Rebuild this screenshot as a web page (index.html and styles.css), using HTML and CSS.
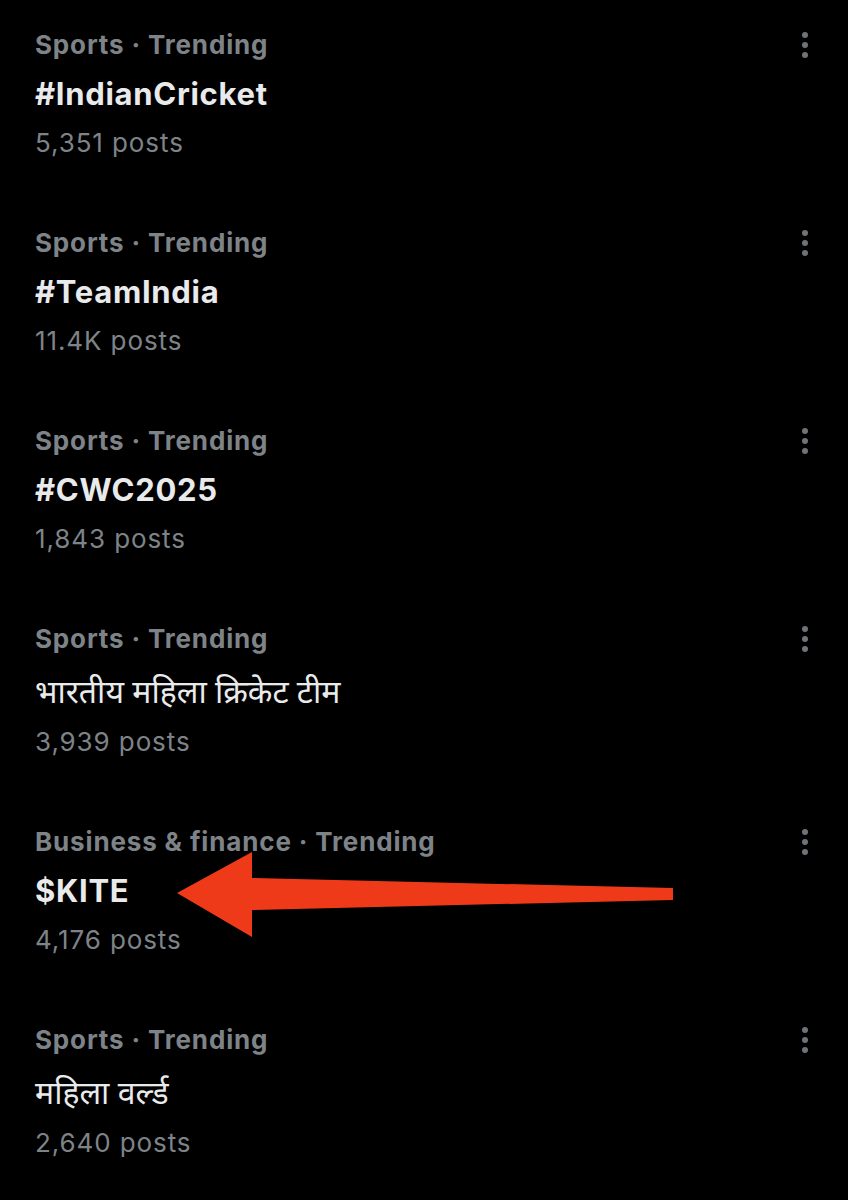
FILE: index.html
```html
<!DOCTYPE html>
<html lang="en">
<head>
<meta charset="utf-8">
<title>Trending</title>
<link rel="stylesheet" href="styles.css">
</head>
<body>

<section id="trends">

  <div class="trend">
    <div class="trend-text">
      <div class="trend-meta">Sports · Trending</div>
      <div class="trend-name">#IndianCricket</div>
      <div class="trend-count">5,351 posts</div>
    </div>
    <svg class="more" viewBox="0 0 24 24"><circle cx="12" cy="4" r="3"/><circle cx="12" cy="14" r="3"/><circle cx="12" cy="24" r="3"/></svg>
  </div>

  <div class="trend">
    <div class="trend-text">
      <div class="trend-meta">Sports · Trending</div>
      <div class="trend-name">#TeamIndia</div>
      <div class="trend-count">11.4K posts</div>
    </div>
    <svg class="more" viewBox="0 0 24 24"><circle cx="12" cy="4" r="3"/><circle cx="12" cy="14" r="3"/><circle cx="12" cy="24" r="3"/></svg>
  </div>

  <div class="trend">
    <div class="trend-text">
      <div class="trend-meta">Sports · Trending</div>
      <div class="trend-name">#CWC2025</div>
      <div class="trend-count">1,843 posts</div>
    </div>
    <svg class="more" viewBox="0 0 24 24"><circle cx="12" cy="4" r="3"/><circle cx="12" cy="14" r="3"/><circle cx="12" cy="24" r="3"/></svg>
  </div>

  <div class="trend">
    <div class="trend-text">
      <div class="trend-meta">Sports · Trending</div>
      <div class="trend-name hindi" lang="hi">भारतीय महिला क्रिकेट टीम</div>
      <div class="trend-count">3,939 posts</div>
    </div>
    <svg class="more" viewBox="0 0 24 24"><circle cx="12" cy="4" r="3"/><circle cx="12" cy="14" r="3"/><circle cx="12" cy="24" r="3"/></svg>
  </div>

  <div class="trend">
    <div class="trend-text">
      <div class="trend-meta">Business &amp; finance · Trending</div>
      <div class="trend-name">$KITE</div>
      <div class="trend-count">4,176 posts</div>
    </div>
    <svg class="more" viewBox="0 0 24 24"><circle cx="12" cy="4" r="3"/><circle cx="12" cy="14" r="3"/><circle cx="12" cy="24" r="3"/></svg>
  </div>

  <div class="trend">
    <div class="trend-text">
      <div class="trend-meta">Sports · Trending</div>
      <div class="trend-name hindi" lang="hi">महिला वर्ल्ड</div>
      <div class="trend-count">2,640 posts</div>
    </div>
    <svg class="more" viewBox="0 0 24 24"><circle cx="12" cy="4" r="3"/><circle cx="12" cy="14" r="3"/><circle cx="12" cy="24" r="3"/></svg>
  </div>

</section>

<!-- red pointer drawn over the $KITE row -->
<svg class="pointer" viewBox="0 0 848 1200">
  <polygon points="177,893 252,852 252,878 673,888 673,900 252,910 252,937"/>
</svg>

</body>
</html>
```

FILE: styles.css
```css
html, body {
    margin: 0;
    padding: 0;
    background: #000;
}
body {
    font-family: Inter, "Liberation Sans", "Noto Sans Devanagari", sans-serif;
    color: #e7e9ea;
    position: relative;
    min-height: 1200px;
}

#trends {
    padding: 20px 31px 0 35px;
}

.trend {
    display: flex;
    justify-content: space-between;
    align-items: flex-start;
    padding-bottom: 50px;
}

.trend-meta {
    font-size: 26px;
    font-weight: 700;
    line-height: 50px;
    letter-spacing: 0.85px;
    color: #7e8388;
}

.trend-name {
    font-size: 31px;
    font-weight: 700;
    line-height: 48px;
    letter-spacing: 0.7px;
    color: #e9eaeb;
}
.trend-name.hindi {
    font-family: "Open Sans", "Noto Sans Devanagari", sans-serif;
    font-weight: 400;
    font-size: 32px;
    line-height: 53px;
    letter-spacing: 0;
}

.trend-count {
    font-size: 26px;
    line-height: 50px;
    letter-spacing: 0.9px;
    color: #7e8388;
}

.more {
    width: 24px;
    height: 30px;
    margin-top: 8px;
    fill: #6f7378;
    overflow: visible;
}

.pointer {
    position: absolute;
    left: 0;
    top: 0;
    width: 848px;
    height: 1200px;
    fill: #ef3a1a;
    pointer-events: none;
}
```
